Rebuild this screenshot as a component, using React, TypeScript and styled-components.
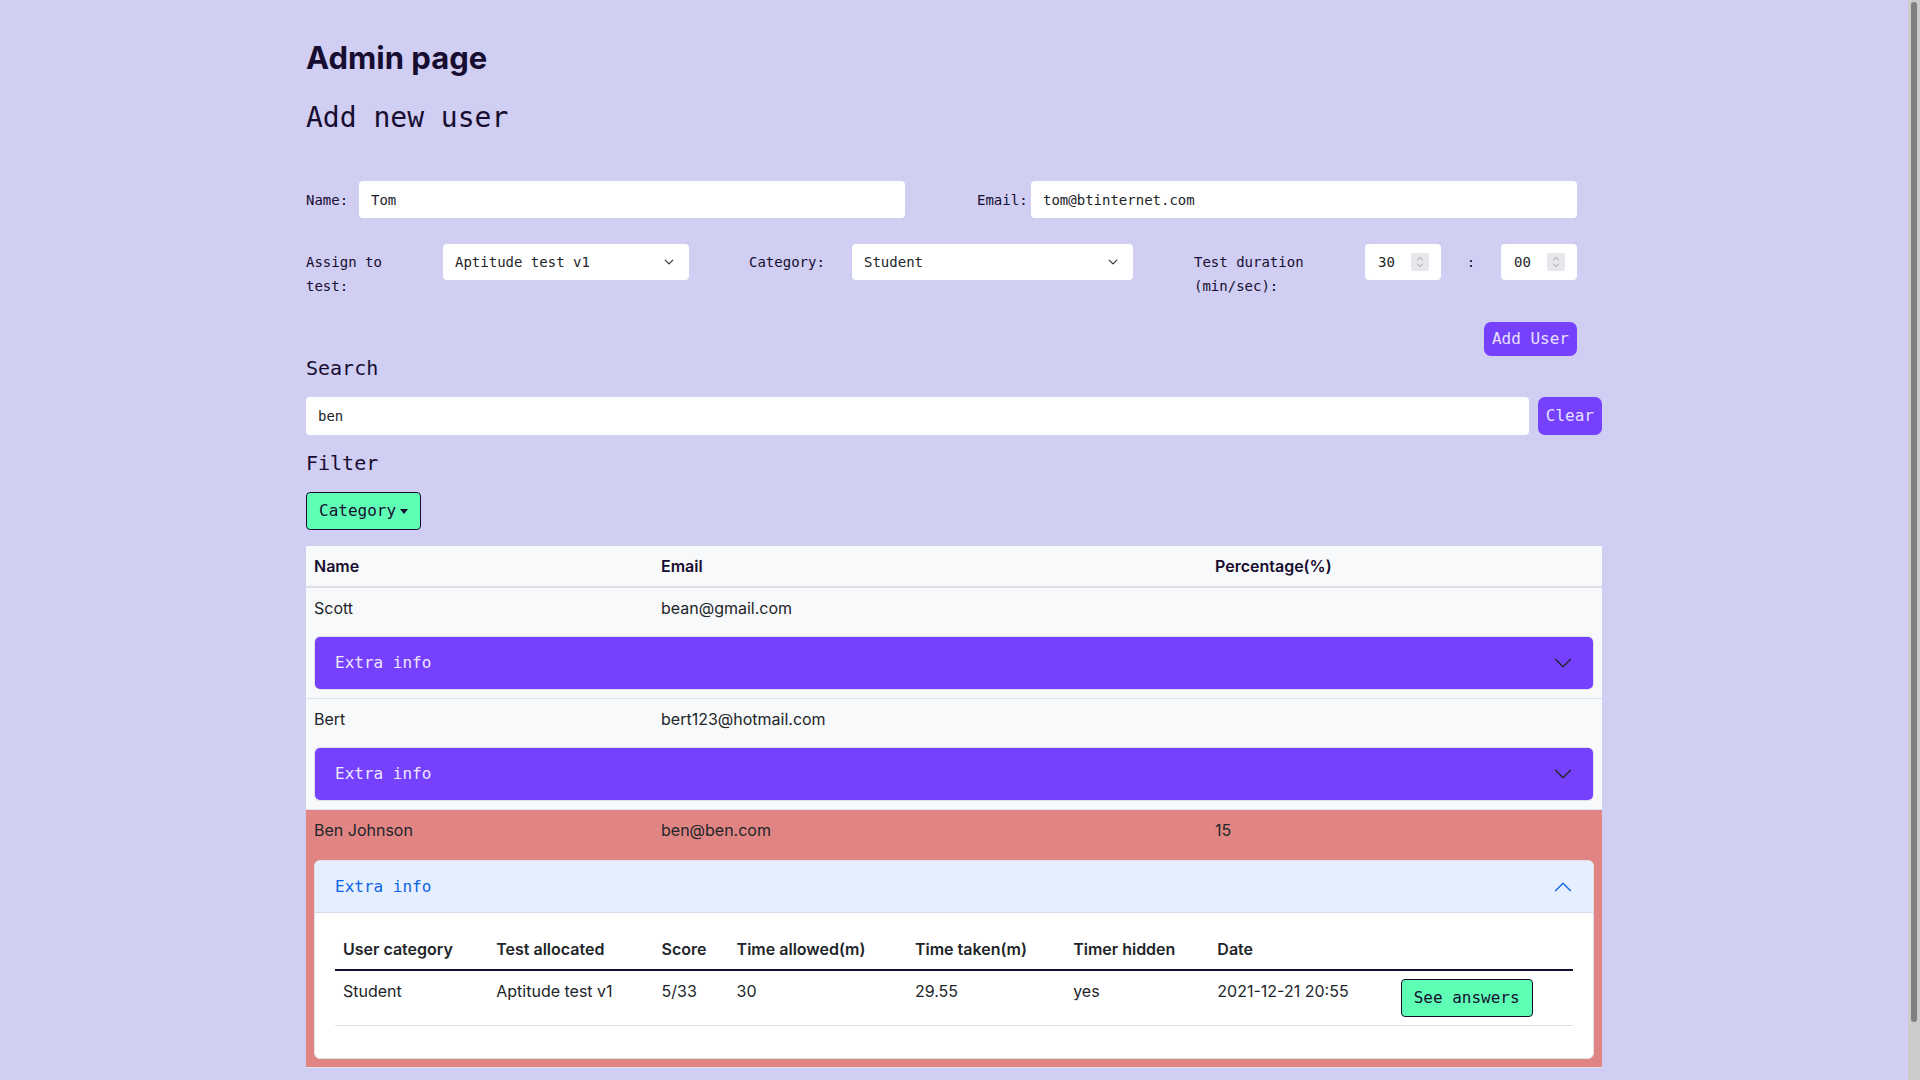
import React from "react";
import styled, { createGlobalStyle } from "styled-components";

const MONO = `"DejaVu Sans Mono", "Liberation Mono", monospace`;
const SANS = `Inter, "Noto Sans", "Liberation Sans", sans-serif`;
const INK = "#170d30";
const TEXT = "#212529";
const PURPLE = "#7540fe";
const GREEN = "#5effb5";
const BG = "#d0cef2";

const GlobalStyle = createGlobalStyle`
  * { box-sizing: border-box; }
  html { background: ${BG}; }
  body { margin: 0 12px 0 0; background: ${BG}; color: ${INK}; font-family: ${SANS}; }
`;

const ScrollTrack = styled.div`
  position: fixed;
  top: 0;
  right: 0;
  width: 12px;
  height: 100vh;
  background: #cbcbcb;
  padding: 2px 3px;
`;

const ScrollThumb = styled.div`
  width: 6px;
  height: 1020px;
  border-radius: 3px;
  background: #7f7f7f;
`;

const Page = styled.main`
  max-width: 1320px;
  margin: 0 auto;
  padding: 39px 12px 74px;
`;

const Title = styled.h1`
  margin: 0;
  font-family: ${SANS};
  font-size: 31px;
  line-height: 37px;
  font-weight: 700;
  color: ${INK};
`;

const Subtitle = styled.h3`
  margin: 25px 0 0;
  font-family: ${MONO};
  font-size: 28px;
  line-height: 34px;
  font-weight: 400;
  color: ${INK};
`;

const FormArea = styled.form`
  width: 1271px;
  margin-top: 46px;
`;

const FormGrid = styled.div<{ $cols: string; $top?: number; $align?: string }>`
  display: grid;
  grid-template-columns: ${(p) => p.$cols};
  align-items: ${(p) => p.$align ?? "center"};
  margin-top: ${(p) => p.$top ?? 0}px;
`;

const Label = styled.label<{ $maxWidth?: number; $padTop?: number; $center?: boolean }>`
  font-family: ${MONO};
  font-size: 14px;
  line-height: 24px;
  color: ${INK};
  padding-top: ${(p) => p.$padTop ?? 0}px;
  max-width: ${(p) => (p.$maxWidth ? `${p.$maxWidth}px` : "none")};
  justify-self: ${(p) => (p.$center ? "center" : "start")};
`;

const TextInput = styled.input<{ $h?: number }>`
  width: 100%;
  height: ${(p) => p.$h ?? 37}px;
  border: none;
  border-radius: 4px;
  background: #fff;
  padding: 0 12px;
  font-family: ${MONO};
  font-size: 14px;
  color: ${TEXT};
  outline: none;
`;

const SelectBox = styled.button`
  width: 100%;
  height: 36px;
  border: none;
  border-radius: 4px;
  background: #fff;
  padding: 0 15px 0 12px;
  display: flex;
  align-items: center;
  justify-content: space-between;
  font-family: ${MONO};
  font-size: 14px;
  color: ${TEXT};
  cursor: pointer;
`;

const NumberBox = styled.div`
  width: 76px;
  height: 36px;
  background: #fff;
  border-radius: 4px;
  display: flex;
  align-items: center;
  justify-content: space-between;
  padding: 0 12px 0 13px;
`;

const NumberField = styled.input`
  width: 26px;
  border: none;
  background: transparent;
  padding: 0;
  font-family: ${MONO};
  font-size: 14px;
  color: ${TEXT};
  outline: none;
  appearance: textfield;
  &::-webkit-inner-spin-button,
  &::-webkit-outer-spin-button {
    -webkit-appearance: none;
    margin: 0;
  }
`;

const Spinner = styled.span`
  width: 18px;
  height: 18px;
  background: #e7e7ec;
  border-radius: 2px;
  display: flex;
  align-items: center;
  justify-content: center;
`;

const ActionRow = styled.div<{ $top: number }>`
  display: flex;
  justify-content: flex-end;
  margin-top: ${(p) => p.$top}px;
`;

const PurpleButton = styled.button<{ $py: number }>`
  background: ${PURPLE};
  color: #e6e1ff;
  border: 1px solid transparent;
  border-radius: 7px;
  padding: ${(p) => p.$py}px 7px;
  font-family: ${MONO};
  font-size: 16px;
  line-height: 24px;
  cursor: pointer;
`;

const SectionTitle = styled.h5<{ $top?: number }>`
  margin: ${(p) => p.$top ?? 0}px 0 0;
  font-family: ${MONO};
  font-size: 20px;
  line-height: 24px;
  font-weight: 500;
  color: ${INK};
`;

const SearchRow = styled.div`
  display: flex;
  gap: 9px;
  margin-top: 17px;
  align-items: stretch;
`;

const SearchInput = styled(TextInput)`
  flex: 1;
  height: 38px;
`;

const FilterBar = styled.div`
  margin-top: 17px;
  display: flex;
`;

const GreenButton = styled.button`
  display: inline-flex;
  align-items: center;
  background: ${GREEN};
  color: ${INK};
  border: 1px solid ${INK};
  border-radius: 4px;
  padding: 6px 12px;
  font-family: ${MONO};
  font-size: 16px;
  line-height: 24px;
  cursor: pointer;
`;

const Caret = styled.span`
  margin-left: 4px;
  border-top: 5px solid ${INK};
  border-left: 4.5px solid transparent;
  border-right: 4.5px solid transparent;
`;

const Table = styled.table`
  width: 100%;
  margin-top: 16px;
  border-collapse: collapse;
  table-layout: fixed;
  background: #f8f9fa;
  font-family: ${SANS};
  font-size: 16px;
  line-height: 24px;
`;

const HeadCell = styled.th`
  text-align: left;
  padding: 8px;
  font-weight: 600;
  color: ${INK};
  border-bottom: 2px solid #dfe0e4;
`;

const Row = styled.tr<{ $danger?: boolean }>`
  background: ${(p) => (p.$danger ? "#e08583" : "transparent")};
`;

const Cell = styled.td<{ $divider?: boolean; $padTop?: number }>`
  padding: ${(p) => p.$padTop ?? 8}px 8px 8px;
  color: ${TEXT};
  vertical-align: top;
  border-bottom: ${(p) => (p.$divider ? "1px solid #dee2e6" : "none")};
`;

const AccItem = styled.div`
  border: 1px solid #dee2e6;
  border-radius: 6px;
  overflow: hidden;
  background: #fff;
`;

const AccHeader = styled.button<{ $open?: boolean }>`
  width: 100%;
  display: flex;
  align-items: center;
  justify-content: space-between;
  padding: 14px 20px;
  border: none;
  background: ${(p) => (p.$open ? "#e6efff" : PURPLE)};
  color: ${(p) => (p.$open ? "#0c63e4" : "#ece8ff")};
  box-shadow: ${(p) => (p.$open ? "inset 0 -1px 0 #d2dbe8" : "none")};
  font-family: ${MONO};
  font-size: 16px;
  line-height: 24px;
  text-align: left;
  cursor: pointer;
`;

const Chevron = styled.svg<{ $open?: boolean }>`
  width: 20px;
  height: 20px;
  transform: ${(p) => (p.$open ? "rotate(180deg)" : "none")};
`;

const AccBody = styled.div`
  padding: 16px 20px;
`;

const InnerTable = styled.table`
  width: 100%;
  border-collapse: collapse;
  table-layout: fixed;
  margin-bottom: 16px;
  font-family: ${SANS};
  font-size: 16px;
  line-height: 24px;
`;

const InnerHead = styled.th`
  text-align: left;
  padding: 8px;
  font-weight: 600;
  color: ${TEXT};
  border-bottom: 2px solid ${INK};
`;

const InnerCell = styled.td`
  padding: 8px;
  color: ${TEXT};
  vertical-align: top;
  border-bottom: 1px solid #dee2e6;
`;

const SmallChevron = () => (
  <svg width="10" height="10" viewBox="0 0 16 16" fill="none" stroke="#343a40" strokeWidth="2" strokeLinecap="round" strokeLinejoin="round">
    <path d="M2 5l6 6 6-6" />
  </svg>
);

const SpinIcon = () => (
  <svg width="10" height="14" viewBox="0 0 10 14" fill="none" stroke="#9a9aa2" strokeWidth="1" strokeLinecap="round">
    <path d="M2.5 5 5 2.5 7.5 5" />
    <path d="M2.5 9 5 11.5 7.5 9" />
  </svg>
);

const AccordionChevron = ({ open, color }: { open?: boolean; color: string }) => (
  <Chevron $open={open} viewBox="0 0 16 16" fill="none" stroke={color} strokeWidth="1" strokeLinecap="round" strokeLinejoin="round">
    <path d="M2 5l6 6 6-6" />
  </Chevron>
);

type User = { name: string; email: string; pct: string; danger?: boolean; open?: boolean };

const users: User[] = [
  { name: "Scott", email: "bean@gmail.com", pct: "" },
  { name: "Bert", email: "bert123@hotmail.com", pct: "" },
  { name: "Ben Johnson", email: "ben@ben.com", pct: "15", danger: true, open: true },
];

const innerCols = [153, 165, 75, 178, 158, 144, 183, 180];

const ExtraInfo = ({ open }: { open?: boolean }) => (
  <AccItem>
    <AccHeader type="button" $open={open}>
      <span>Extra info</span>
      <AccordionChevron open={open} color={open ? "#0c63e4" : "#212529"} />
    </AccHeader>
    {open && (
      <AccBody>
        <InnerTable>
          <colgroup>
            {innerCols.map((w, i) => (
              <col key={i} style={{ width: w }} />
            ))}
          </colgroup>
          <thead>
            <tr>
              <InnerHead>User category</InnerHead>
              <InnerHead>Test allocated</InnerHead>
              <InnerHead>Score</InnerHead>
              <InnerHead>Time allowed(m)</InnerHead>
              <InnerHead>Time taken(m)</InnerHead>
              <InnerHead>Timer hidden</InnerHead>
              <InnerHead>Date</InnerHead>
              <InnerHead />
            </tr>
          </thead>
          <tbody>
            <tr>
              <InnerCell>Student</InnerCell>
              <InnerCell>Aptitude test v1</InnerCell>
              <InnerCell>5/33</InnerCell>
              <InnerCell>30</InnerCell>
              <InnerCell>29.55</InnerCell>
              <InnerCell>yes</InnerCell>
              <InnerCell>2021-12-21 20:55</InnerCell>
              <InnerCell>
                <GreenButton type="button">See answers</GreenButton>
              </InnerCell>
            </tr>
          </tbody>
        </InnerTable>
      </AccBody>
    )}
  </AccItem>
);

export default function App() {
  return (
    <>
      <GlobalStyle />
      <Page>
        <Title>Admin page</Title>
        <Subtitle>Add new user</Subtitle>

        <FormArea onSubmit={(e) => e.preventDefault()}>
          <FormGrid $cols="53px 546px 72px 54px 546px">
            <Label htmlFor="name">Name:</Label>
            <TextInput id="name" defaultValue="Tom" />
            <span />
            <Label htmlFor="email">Email:</Label>
            <TextInput id="email" defaultValue="tom@btinternet.com" />
          </FormGrid>

          <FormGrid $cols="137px 246px 60px 103px 281px 61px 171px 76px 60px 76px" $top={26} $align="start">
            <Label $maxWidth={90} $padTop={6}>Assign to test:</Label>
            <SelectBox type="button">
              <span>Aptitude test v1</span>
              <SmallChevron />
            </SelectBox>
            <span />
            <Label $padTop={6}>Category:</Label>
            <SelectBox type="button">
              <span>Student</span>
              <SmallChevron />
            </SelectBox>
            <span />
            <Label $padTop={6}>Test duration (min/sec):</Label>
            <NumberBox>
              <NumberField type="number" defaultValue="30" />
              <Spinner>
                <SpinIcon />
              </Spinner>
            </NumberBox>
            <Label $padTop={6} $center>:</Label>
            <NumberBox>
              <NumberField type="text" defaultValue="00" />
              <Spinner>
                <SpinIcon />
              </Spinner>
            </NumberBox>
          </FormGrid>

          <ActionRow $top={24}>
            <PurpleButton type="submit" $py={4}>Add User</PurpleButton>
          </ActionRow>
        </FormArea>

        <SectionTitle>Search</SectionTitle>
        <SearchRow>
          <SearchInput defaultValue="ben" />
          <PurpleButton type="button" $py={6}>Clear</PurpleButton>
        </SearchRow>

        <SectionTitle $top={16}>Filter</SectionTitle>
        <FilterBar>
          <GreenButton type="button">
            Category
            <Caret />
          </GreenButton>
        </FilterBar>

        <Table>
          <colgroup>
            <col style={{ width: 347 }} />
            <col style={{ width: 554 }} />
            <col style={{ width: 395 }} />
          </colgroup>
          <thead>
            <tr>
              <HeadCell>Name</HeadCell>
              <HeadCell>Email</HeadCell>
              <HeadCell>Percentage(%)</HeadCell>
            </tr>
          </thead>
          <tbody>
            {users.map((u) => (
              <React.Fragment key={u.email}>
                <Row $danger={u.danger}>
                  <Cell>{u.name}</Cell>
                  <Cell>{u.email}</Cell>
                  <Cell>{u.pct}</Cell>
                </Row>
                <Row $danger={u.danger}>
                  <Cell colSpan={3} $divider $padTop={u.open ? 10 : 8}>
                    <ExtraInfo open={u.open} />
                  </Cell>
                </Row>
              </React.Fragment>
            ))}
          </tbody>
        </Table>
      </Page>
      <ScrollTrack aria-hidden>
        <ScrollThumb />
      </ScrollTrack>
    </>
  );
}
